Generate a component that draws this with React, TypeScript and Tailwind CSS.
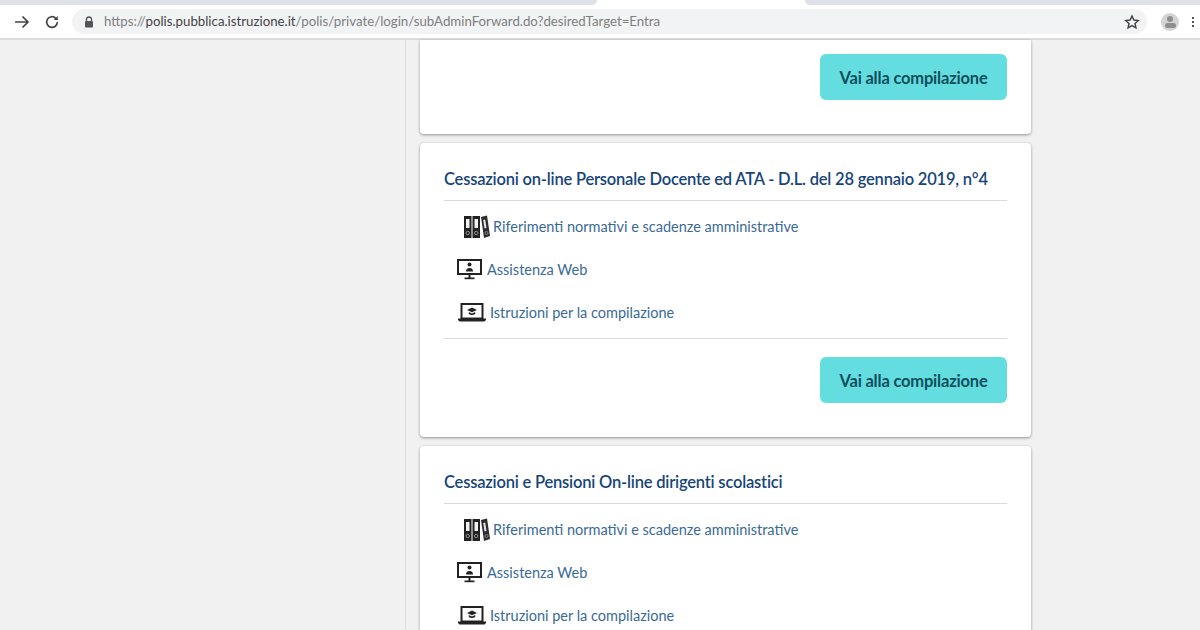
import React from "react";

const Binders = () => (
  <svg width="27" height="24" viewBox="0 0 27 24" className="shrink-0">
    <rect x="1" y="1" width="7.500" height="22" fill="#222" />
    <rect x="9.500" y="1" width="7.500" height="22" fill="#222" />
    <path d="M18 2l6-1.500 3 20.500-6 2z" fill="#2c2c2c" />
    <rect x="3" y="4" width="3.500" height="9" fill="#f2f2f2" />
    <rect x="11.500" y="4" width="3.500" height="9" fill="#f2f2f2" />
    <path d="M20.200 5l2-.4 1.300 8.500-2 .4z" fill="#e4e4e4" />
    <circle cx="4.700" cy="18" r="1.700" fill="none" stroke="#aaa" strokeWidth="0.800" />
    <circle cx="13.200" cy="18" r="1.700" fill="none" stroke="#aaa" strokeWidth="0.800" />
    <circle cx="23.500" cy="18" r="1.500" fill="none" stroke="#999" strokeWidth="0.800" />
  </svg>
);

const Monitor = () => (
  <svg width="25" height="21" viewBox="0 0 25 21" className="shrink-0">
    <rect x="1" y="1" width="23" height="14" fill="#fff" stroke="#222" strokeWidth="2" />
    <circle cx="12.500" cy="5.500" r="2" fill="#222" />
    <path d="M9 12.500c0-2.500 1.500-3.500 3.500-3.500s3.500 1 3.500 3.500z" fill="#222" />
    <rect x="11.500" y="15" width="2" height="4" fill="#222" />
    <rect x="7.500" y="18.500" width="10" height="1.700" fill="#222" />
  </svg>
);

const Laptop = () => (
  <svg width="28" height="19" viewBox="0 0 28 19" className="shrink-0">
    <rect x="3.500" y="1" width="21" height="14.500" fill="#fff" stroke="#222" strokeWidth="2" />
    <path d="M0 15.500h28v1.500l-1.500 1.500h-25L0 17z" fill="#222" />
    <path d="M14 4.500l5 2.400-5 2.400-5-2.400z" fill="#222" />
    <path d="M10.800 9v2c2 1.200 4.400 1.200 6.400 0V9l-3.200 1.500z" fill="#222" />
  </svg>
);

const Links = () => (
  <div className="flex flex-col">
    <a className="flex items-center h-[24px] pl-[19px] gap-[3px] text-[14.5px] text-[#3a6a96]">
      <Binders />
      <span>Riferimenti normativi e scadenze amministrative</span>
    </a>
    <a className="flex items-center h-[21px] mt-[20px] pl-[13px] gap-[5px] text-[14.5px] text-[#3a6a96]">
      <Monitor />
      <span>Assistenza Web</span>
    </a>
    <a className="flex items-center h-[21px] mt-[22px] pl-[14px] gap-[4px] text-[14.5px] text-[#3a6a96]">
      <Laptop />
      <span>Istruzioni per la compilazione</span>
    </a>
  </div>
);

const Btn = () => (
  <button className="w-[187px] h-[46px] pt-[2px] rounded-[6px] bg-[#64dde1] text-[#0f4f5c] text-[16.5px] font-bold tracking-[-0.2px]">
    Vai alla compilazione
  </button>
);

const Card = ({ title, footer = true, children }: { title: string; footer?: boolean; children: React.ReactNode }) => (
  <section className="bg-white rounded-[4px] shadow-[0_1px_3px_rgba(0,0,0,0.4)] px-[24px] pt-[22px] pb-[34px]">
    <h2 className="h-[36px] border-b border-[#d9d9d9] text-[16.5px] leading-[28px] font-semibold tracking-[-0.2px] text-[#17457a] whitespace-nowrap">
      {title}
    </h2>
    <div className="pt-[14px] pb-[15px]">{children}</div>
    {footer && (
      <div className="border-t border-[#d9d9d9] pt-[18px] flex justify-end">
        <Btn />
      </div>
    )}
  </section>
);

export default function App() {
  return (
    <div
      className="w-[1200px] h-[630px] overflow-hidden bg-[#f1f1f1] flex flex-col"
      style={{ fontFamily: "Lato, 'Noto Sans', sans-serif" }}
    >
      <div className="h-[5px] bg-white flex shrink-0">
        <div className="w-[597px] bg-[#dfe1e8] rounded-br-[6px]" />
        <div className="w-[208px]" />
        <div className="flex-1 bg-[#dfe1e8] rounded-bl-[6px]" />
      </div>
      <header className="h-[35px] shrink-0 bg-white border-b-2 border-[#dcdcdc] flex items-center">
        <svg width="16" height="16" viewBox="0 0 16 16" className="ml-[14px]" fill="none" stroke="#444" strokeWidth="1.700">
          <path d="M1 8h13M8.500 2.500L14 8l-5.500 5.500" />
        </svg>
        <svg width="16" height="16" viewBox="0 0 24 24" className="ml-[14px]" fill="none" stroke="#444" strokeWidth="2.500">
          <path d="M20 12a8 8 0 1 1-2.500-5.800L20 8.500" />
          <path d="M20.500 3v6h-6" fill="#444" stroke="none" />
        </svg>
        <div className="ml-[12px] w-[1075px] h-[25px] rounded-full bg-[#f1f3f4] flex items-center pl-[12px]">
          <svg width="10" height="12" viewBox="0 0 10 12" className="shrink-0">
            <path d="M2.500 5V3.500a2.500 2.500 0 0 1 5 0V5" fill="none" stroke="#555" strokeWidth="1.300" />
            <rect x="1" y="5" width="8" height="6.500" rx="1" fill="#555" />
          </svg>
          <span className="ml-[10px] text-[13.25px] text-[#808080] whitespace-nowrap">
            https://<span className="text-[#444]">polis.pubblica.istruzione.it</span>/polis/private/login/subAdminForward.do?desiredTarget=Entra
          </span>
          <svg width="16" height="16" viewBox="0 0 24 24" className="ml-auto mr-[7px]" fill="none" stroke="#444" strokeWidth="2.200">
            <path d="M12 3l2.800 6 6.500.8-4.800 4.400 1.300 6.500L12 17.500l-5.800 3.200 1.300-6.500L2.700 9.800 9.200 9z" />
          </svg>
        </div>
        <div className="ml-[14px] w-[18px] h-[18px] rounded-full bg-[#d4d4d4] flex flex-col items-center justify-center gap-[1px]">
          <div className="w-[6px] h-[6px] rounded-full bg-[#8f8f8f]" />
          <div className="w-[11px] h-[5px] rounded-full bg-[#8f8f8f]" />
        </div>
        <div className="ml-[13px] flex flex-col gap-[2px]">
          <div className="w-[2px] h-[2px] bg-[#555]" />
          <div className="w-[2px] h-[2px] bg-[#555]" />
          <div className="w-[2px] h-[2px] bg-[#555]" />
        </div>
      </header>
      <main className="flex-1 min-h-0 flex">
        <div className="w-[405px] shrink-0 border-r border-[#dcdcdc] box-content" />
        <div className="w-[611px] ml-[14px] flex flex-col gap-[9px] shrink-0">
          <section className="bg-white rounded-b-[4px] shadow-[0_1px_3px_rgba(0,0,0,0.4)] h-[94px] shrink-0 pt-[14px] pr-[24px] flex justify-end items-start">
            <Btn />
          </section>
          <Card title="Cessazioni on-line Personale Docente ed ATA - D.L. del 28 gennaio 2019, n°4">
            <Links />
          </Card>
          <Card title="Cessazioni e Pensioni On-line dirigenti scolastici" footer={false}>
            <Links />
          </Card>
        </div>
      </main>
    </div>
  );
}
